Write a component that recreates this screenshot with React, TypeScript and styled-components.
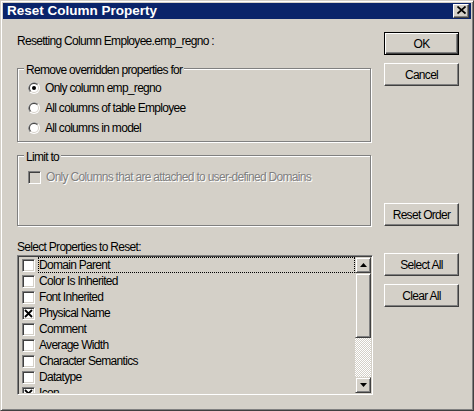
import React from 'react';
import styled, { createGlobalStyle } from 'styled-components';

const GlobalStyle = createGlobalStyle`
  html, body {
    margin: 0;
    padding: 0;
    background: #d4d0c8;
  }
  body {
    font-family: 'Liberation Sans', Arial, sans-serif;
    font-size: 12px;
    letter-spacing: -0.7px;
    color: #000;
  }
`;

const Window = styled.div`
  box-sizing: border-box;
  width: 474px;
  height: 411px;
  padding: 2px;
  background: #d4d0c8;
  border: 1px solid;
  border-color: #d4d0c8 #404040 #404040 #d4d0c8;
  box-shadow: inset 1px 1px 0 #fff, inset -1px -1px 0 #808080;
  display: flex;
  flex-direction: column;
`;

const TitleBar = styled.div`
  height: 16px;
  background: #0a246a;
  display: flex;
  align-items: center;
  justify-content: space-between;
  padding: 0 2px 0 4px;
`;

const TitleText = styled.span`
  color: #fff;
  font-weight: bold;
  font-size: 13.5px;
  letter-spacing: 0;
  line-height: 16px;
`;

const CloseButton = styled.div`
  box-sizing: border-box;
  width: 16px;
  height: 14px;
  background: #d4d0c8;
  border: 1px solid;
  border-color: #fff #404040 #404040 #fff;
  box-shadow: inset -1px -1px 0 #808080;
  display: flex;
  align-items: flex-start;
  justify-content: center;
`;

const Body = styled.div`
  flex: 1;
  display: flex;
  padding: 13px 0 0 14px;
`;

const LeftColumn = styled.div`
  width: 356px;
  display: flex;
  flex-direction: column;
`;

const Caption = styled.div`
  line-height: 18px;
  height: 18px;
`;

const GroupBox = styled.div<{ $height: number; $top: number; $padTop: number }>`
  position: relative;
  box-sizing: border-box;
  width: 354px;
  height: ${(p) => p.$height}px;
  margin-top: ${(p) => p.$top}px;
  padding: ${(p) => p.$padTop}px 0 0 10px;
  border: 1px solid #808080;
  box-shadow: 1px 1px 0 #fff, inset 1px 1px 0 #fff;
`;

const GroupLegend = styled.span`
  position: absolute;
  top: -7px;
  left: 6px;
  padding: 0 2px;
  line-height: 16px;
  background: #d4d0c8;
`;

const OptionRow = styled.div<{ $height: number }>`
  height: ${(p) => p.$height}px;
  display: flex;
  align-items: center;
  gap: 5px;
`;

const DisabledText = styled.span`
  color: #808080;
  text-shadow: 1px 1px 0 #fff;
`;

const CheckBox = styled.span<{ $disabled?: boolean }>`
  box-sizing: border-box;
  flex: none;
  width: 13px;
  height: 13px;
  padding: 1px;
  background: ${(p) => (p.$disabled ? '#d4d0c8' : '#fff')};
  border: 1px solid;
  border-color: #808080 #fff #fff #808080;
  box-shadow: inset 1px 1px 0 #404040, inset -1px -1px 0 #d4d0c8;
  display: flex;
`;

const Prompt = styled.div`
  margin-top: 13px;
  line-height: 16px;
  height: 16px;
`;

const ListBox = styled.div`
  box-sizing: border-box;
  width: 356px;
  height: 140px;
  border: 1px solid;
  border-color: #808080 #fff #fff #808080;
  padding: 1px;
  background: #d4d0c8;
  box-shadow: inset 1px 1px 0 #404040, inset -1px -1px 0 #d4d0c8;
  display: flex;
`;

const ListItems = styled.div`
  flex: 1;
  overflow: hidden;
  display: flex;
  flex-direction: column;
`;

const ListRow = styled.div`
  flex: none;
  height: 16px;
  display: flex;
  align-items: center;
  padding-left: 3px;
`;

const ListLabel = styled.span<{ $focused?: boolean }>`
  box-sizing: border-box;
  flex: 1;
  height: 16px;
  margin-left: 3px;
  line-height: 14px;
  border: 1px ${(p) => (p.$focused ? 'dotted #000' : 'solid transparent')};
`;

const ScrollBar = styled.div`
  width: 16px;
  display: flex;
  flex-direction: column;
`;

const ScrollButton = styled.div`
  box-sizing: border-box;
  height: 16px;
  background: #d4d0c8;
  border: 1px solid;
  border-color: #d4d0c8 #404040 #404040 #d4d0c8;
  box-shadow: inset 1px 1px 0 #fff, inset -1px -1px 0 #808080;
  display: flex;
  align-items: center;
  justify-content: center;
`;

const ScrollThumb = styled(ScrollButton)`
  height: 65px;
`;

const ScrollTrack = styled.div`
  flex: 1;
  background: repeating-conic-gradient(#fff 0 25%, #d4d0c8 0 50%);
  background-size: 2px 2px;
`;

const RightColumn = styled.div`
  width: 75px;
  margin-left: 11px;
  display: flex;
  flex-direction: column;
`;

const PushButton = styled.div<{ $gap?: number; $default?: boolean }>`
  box-sizing: border-box;
  height: 23px;
  margin-top: ${(p) => p.$gap ?? 0}px;
  background: #d4d0c8;
  border: 1px solid;
  border-color: ${(p) => (p.$default ? '#000' : '#fff #404040 #404040 #fff')};
  box-shadow: ${(p) =>
    p.$default
      ? 'inset 1px 1px 0 #fff, inset -1px -1px 0 #404040, inset -2px -2px 0 #808080'
      : 'inset -1px -1px 0 #808080'};
  display: flex;
  align-items: center;
  justify-content: center;
  line-height: 16px;
`;

const Radio: React.FC<{ checked?: boolean }> = ({ checked }) => (
  <svg width="12" height="12" viewBox="0 0 12 12" style={{ flex: 'none' }}>
    <circle cx="6" cy="6" r="6" fill="#fff" />
    <path d="M1.76 10.24 A6 6 0 0 1 10.24 1.76 Z" fill="#808080" />
    <circle cx="6" cy="6" r="5" fill="#d4d0c8" />
    <path d="M2.46 9.54 A5 5 0 0 1 9.54 2.46 Z" fill="#404040" />
    <circle cx="6" cy="6" r="4" fill="#fff" />
    {checked && <circle cx="6" cy="6" r="2" fill="#000" />}
  </svg>
);

const CrossMark = () => (
  <svg width="9" height="9" viewBox="0 0 9 9">
    <path d="M1 1 L8 8 M8 1 L1 8" stroke="#000" strokeWidth="1.8" />
  </svg>
);

const Arrow: React.FC<{ down?: boolean }> = ({ down }) => (
  <svg width="7" height="4" viewBox="0 0 7 4">
    <path d={down ? 'M0 0 H7 L3.5 4 Z' : 'M0 4 H7 L3.5 0 Z'} fill="#000" />
  </svg>
);

const properties = [
  { name: 'Domain Parent', checked: false },
  { name: 'Color Is Inherited', checked: false },
  { name: 'Font Inherited', checked: false },
  { name: 'Physical Name', checked: true },
  { name: 'Comment', checked: false },
  { name: 'Average Width', checked: false },
  { name: 'Character Semantics', checked: false },
  { name: 'Datatype', checked: false },
  { name: 'Icon', checked: true },
];

const scopes = [
  { label: 'Only column emp_regno', checked: true },
  { label: 'All columns of table Employee', checked: false },
  { label: 'All columns in model', checked: false },
];

const App: React.FC = () => {
  return (
    <>
      <GlobalStyle />
      <Window>
        <TitleBar>
          <TitleText>Reset Column Property</TitleText>
          <CloseButton>
            <svg width="9" height="9" viewBox="0 0 9 9" style={{ marginTop: 1 }}>
              <path d="M0.5 0.5 L8.5 7.5 M8.5 0.5 L0.5 7.5" stroke="#000" strokeWidth="1.7" />
            </svg>
          </CloseButton>
        </TitleBar>
        <Body>
          <LeftColumn>
            <Caption>Resetting Column Employee.emp_regno :</Caption>

            <GroupBox $height={74} $top={18} $padTop={9}>
              <GroupLegend>Remove overridden properties for</GroupLegend>
              {scopes.map((s) => (
                <OptionRow key={s.label} $height={20}>
                  <Radio checked={s.checked} />
                  <span>{s.label}</span>
                </OptionRow>
              ))}
            </GroupBox>

            <GroupBox $height={71} $top={13} $padTop={11}>
              <GroupLegend>Limit to</GroupLegend>
              <OptionRow $height={20}>
                <CheckBox $disabled />
                <DisabledText>
                  Only Columns that are attached to user-defined Domains
                </DisabledText>
              </OptionRow>
            </GroupBox>

            <Prompt>Select Properties to Reset:</Prompt>
            <ListBox>
              <ListItems>
                {properties.map((p, i) => (
                  <ListRow key={p.name}>
                    <CheckBox>{p.checked && <CrossMark />}</CheckBox>
                    <ListLabel $focused={i === 0}>{p.name}</ListLabel>
                  </ListRow>
                ))}
              </ListItems>
              <ScrollBar>
                <ScrollButton>
                  <Arrow />
                </ScrollButton>
                <ScrollThumb />
                <ScrollTrack />
                <ScrollButton>
                  <Arrow down />
                </ScrollButton>
              </ScrollBar>
            </ListBox>
          </LeftColumn>

          <RightColumn>
            <PushButton $default>OK</PushButton>
            <PushButton $gap={8}>Cancel</PushButton>
            <PushButton $gap={117}>Reset Order</PushButton>
            <PushButton $gap={27}>Select All</PushButton>
            <PushButton $gap={8}>Clear All</PushButton>
          </RightColumn>
        </Body>
      </Window>
    </>
  );
};

export default App;
